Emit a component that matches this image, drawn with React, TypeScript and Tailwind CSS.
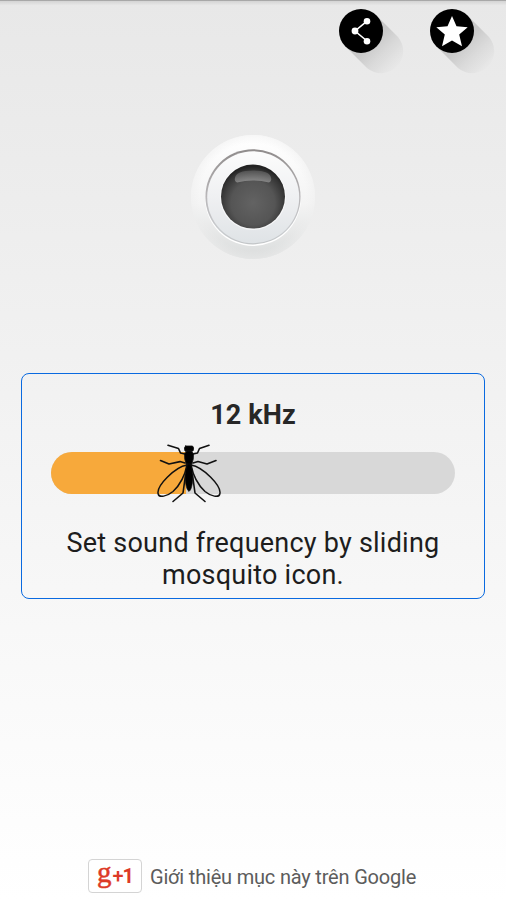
import React, { useState } from "react";

const MIN_KHZ = 8;
const MAX_KHZ = 20;

function IconShadow({ id }: { id: string }) {
    return (
        <>
            <defs>
                <linearGradient id={id} x1="22" y1="22" x2="59" y2="59" gradientUnits="userSpaceOnUse">
                    <stop offset="0.3" stopColor="#000" stopOpacity="0.14" />
                    <stop offset="0.6" stopColor="#000" stopOpacity="0.07" />
                    <stop offset="1" stopColor="#000" stopOpacity="0" />
                </linearGradient>
            </defs>
            <path d="M37.5 6.5 L59 28 A22 22 0 0 1 28 59 L6.5 37.5 Z" fill={`url(#${id})`} />
            <circle cx="22" cy="22" r="22" fill="#000" />
        </>
    );
}

function ShareIcon() {
    return (
        <svg className="block h-[66px] w-[66px]" viewBox="0 0 66 66">
            <IconShadow id="share-shadow" />
            <path d="M28 12.2 L16 22 L28 32" fill="none" stroke="#fff" strokeWidth="1.6" />
            <circle cx="28" cy="12.2" r="3.3" fill="#fff" />
            <circle cx="16" cy="22" r="3.4" fill="#fff" />
            <circle cx="28" cy="32.2" r="3.3" fill="#fff" />
        </svg>
    );
}

function StarIcon() {
    return (
        <svg className="block h-[66px] w-[66px]" viewBox="0 0 66 66">
            <IconShadow id="star-shadow" />
            <path
                d="M22 7 L26.5 17.2 L37.7 18.2 L29.2 25.6 L32 37.3 L22 31.6 L12 37.3 L14.8 25.6 L6.3 18.2 L17.5 17.2 Z"
                fill="#fff"
            />
        </svg>
    );
}

function PowerButton({ on, onToggle }: { on: boolean; onToggle: () => void }) {
    return (
        <button onClick={onToggle} aria-pressed={on} className="block h-[126px] w-[126px]">
            <svg className="block h-full w-full" viewBox="0 0 126 126">
                <defs>
                    <linearGradient id="rim" x1="0" y1="0" x2="0" y2="1">
                        <stop offset="0" stopColor="#fff" />
                        <stop offset="0.55" stopColor="#f4f4f4" />
                        <stop offset="1" stopColor="#dadcdc" />
                    </linearGradient>
                    <radialGradient id="rim-fade">
                        <stop offset="0.86" stopColor="#eee" stopOpacity="0" />
                        <stop offset="1" stopColor="#eee" stopOpacity="0.5" />
                    </radialGradient>
                    <linearGradient id="groove" x1="0" y1="0" x2="0" y2="1">
                        <stop offset="0" stopColor="#8f8b8b" />
                        <stop offset="0.5" stopColor="#b9b7b9" />
                        <stop offset="0.85" stopColor="#c9cccf" />
                        <stop offset="1" stopColor="#c2c5c7" />
                    </linearGradient>
                    <linearGradient id="face" x1="0" y1="0" x2="0" y2="1">
                        <stop offset="0" stopColor="#fcfcfc" />
                        <stop offset="0.5" stopColor="#eff0f2" />
                        <stop offset="1" stopColor="#dfe3e6" />
                    </linearGradient>
                    <radialGradient id="lens" cx="0.5" cy="0.6" r="0.57">
                        <stop offset="0" stopColor="#636363" />
                        <stop offset="0.6" stopColor="#555" />
                        <stop offset="0.9" stopColor="#343434" />
                        <stop offset="1" stopColor="#222" />
                    </radialGradient>
                    <linearGradient id="gloss" x1="0" y1="0" x2="0" y2="1">
                        <stop offset="0" stopColor="#fff" stopOpacity="0.14" />
                        <stop offset="1" stopColor="#fff" stopOpacity="0.32" />
                    </linearGradient>
                </defs>
                <circle cx="63" cy="63" r="62" fill="url(#rim)" />
                <circle cx="63" cy="63" r="62" fill="url(#rim-fade)" />
                <circle cx="63" cy="64" r="48" fill="#fff" />
                <circle cx="63" cy="62.8" r="47.6" fill="url(#groove)" />
                <circle cx="63.2" cy="63.2" r="46" fill="url(#face)" />
                <circle cx="63" cy="63" r="33" fill="#fff" fillOpacity="0.6" />
                <circle cx="63" cy="62.6" r="32" fill="url(#lens)" />
                <path d="M45 44 Q46 36.5 63 36.5 Q80 36.5 81 44 Q82 47 79 48.5 Q63 44.5 47 48.5 Q44 47 45 44 Z" fill="url(#gloss)" />
            </svg>
        </button>
    );
}

function Mosquito() {
    return (
        <svg className="block h-[60px] w-16" viewBox="0 0 64 60" fill="none" stroke="#111" strokeLinecap="round" strokeLinejoin="round">
            {/* legs */}
            <path d="M28 11 L23.5 10 L21.5 5.5 L11 2.2" strokeWidth="1.6" />
            <path d="M36 11 L40.5 10 L42.5 5.5 L52 2.2" strokeWidth="1.6" />
            <path d="M28 20 L23 18.6 L12 21 L3.5 17.5" strokeWidth="1.6" />
            <path d="M36 20 L41 18.6 L50 21 L59 17.5" strokeWidth="1.6" />
            <path d="M28.5 32 L26 50 L16 58.5" strokeWidth="1.6" />
            <path d="M35.5 32 L38 50 L48 58.5" strokeWidth="1.6" />
            {/* wings */}
            <path d="M30 22 C18 24 -1 43 1.2 51 C2 55 10 53.5 16 48.5 C23 42 28 32 30 22Z" strokeWidth="1.5" />
            <path d="M34 22 C46 24 65 43 62.8 51 C62 55 54 53.5 48 48.5 C41 42 36 32 34 22Z" strokeWidth="1.5" />
            {/* head, thorax, abdomen */}
            <path d="M28.5 3 H35.5 Q37.5 4.5 36 8 H28 Q26.5 4.5 28.5 3Z" fill="#000" strokeWidth="0.8" />
            <path d="M29.5 8 H34.5 L36.5 11 Q37 16 34.5 22 H29.5 Q27 16 27.5 11Z" fill="#000" strokeWidth="0.8" />
            <path d="M30.5 21 H33.5 Q36.3 27 35.8 37 Q34.8 47 32 48.5 Q29.2 47 28.2 37 Q27.7 27 30.5 21Z" fill="#000" strokeWidth="0.6" />
        </svg>
    );
}

export default function App() {
    const [on, setOn] = useState(false);
    const [khz, setKhz] = useState(12);

    const percent = ((khz - MIN_KHZ) / (MAX_KHZ - MIN_KHZ)) * 100;

    return (
        <div className="flex h-[900px] w-[506px] flex-col overflow-hidden bg-linear-to-b from-[#e8e8e8] to-white font-['Roboto',sans-serif] text-[#1d1d1d]">
            {/* Status bar edge */}
            <div className="h-[5px] shrink-0 bg-linear-to-b from-[#a8a8a8] from-20% via-[#d6d6d6] via-30% to-[#e6e6e6]" />

            <header className="flex h-[71px] shrink-0 justify-end gap-[25px] pt-1 pr-[10px]">
                <button aria-label="Share" className="self-start"><ShareIcon /></button>
                <button aria-label="Rate" className="self-start"><StarIcon /></button>
            </header>

            <div className="mt-[58px] flex justify-center">
                <PowerButton on={on} onToggle={() => setOn(!on)} />
            </div>

            {/* Frequency panel */}
            <section className="mx-[21px] mt-[113px] h-[226px] shrink-0 rounded-lg border-[1.5px] border-[#0a6ae0] px-[29px] text-center">
                <h1 className="mt-[25px] text-[27px] leading-8 font-bold tracking-[0.1px] text-[#272727]">{khz} kHz</h1>

                <div className="relative mt-[21px] h-[42px]">
                    <div className="h-full overflow-hidden rounded-full bg-[#d8d8d8]">
                        <div className="h-full bg-[#f7a93b]" style={{ width: `${percent}%` }} />
                    </div>
                    <div
                        className="pointer-events-none absolute -top-[9px] -translate-x-1/2"
                        style={{ left: `calc(${percent}% + 3.5px)` }}
                    >
                        <Mosquito />
                    </div>
                    <input
                        type="range"
                        aria-label="Frequency"
                        min={MIN_KHZ}
                        max={MAX_KHZ}
                        value={khz}
                        onChange={(e) => setKhz(Number(e.target.value))}
                        className="absolute inset-0 h-full w-full cursor-pointer opacity-0"
                    />
                </div>

                <p className="mt-[33px] text-[27px] leading-8 tracking-[0.23px]">
                    Set sound frequency by sliding
                    <br />
                    mosquito icon.
                </p>
            </section>

            <footer className="mt-auto mb-[7px] flex items-center pl-[88px]">
                <button className="flex h-[34px] w-[54px] items-center justify-center rounded-[4px] border-[1.5px] border-[#d4d4d4] bg-white text-[#dd3a27]">
                    <span className="-mt-[7px] font-['Liberation_Serif',serif] text-[29px] leading-none [-webkit-text-stroke:0.5px_#dd3a27]">g</span>
                    <span className="ml-px text-[20px] leading-none font-bold tracking-[-1px]">
                        <span className="font-medium">+</span>1
                    </span>
                </button>
                <span className="mt-[2px] ml-2 text-[20px] leading-6 tracking-[-0.19px] whitespace-nowrap text-[#5c5c5c]">Giới thiệu mục này trên Google</span>
            </footer>
        </div>
    );
}
